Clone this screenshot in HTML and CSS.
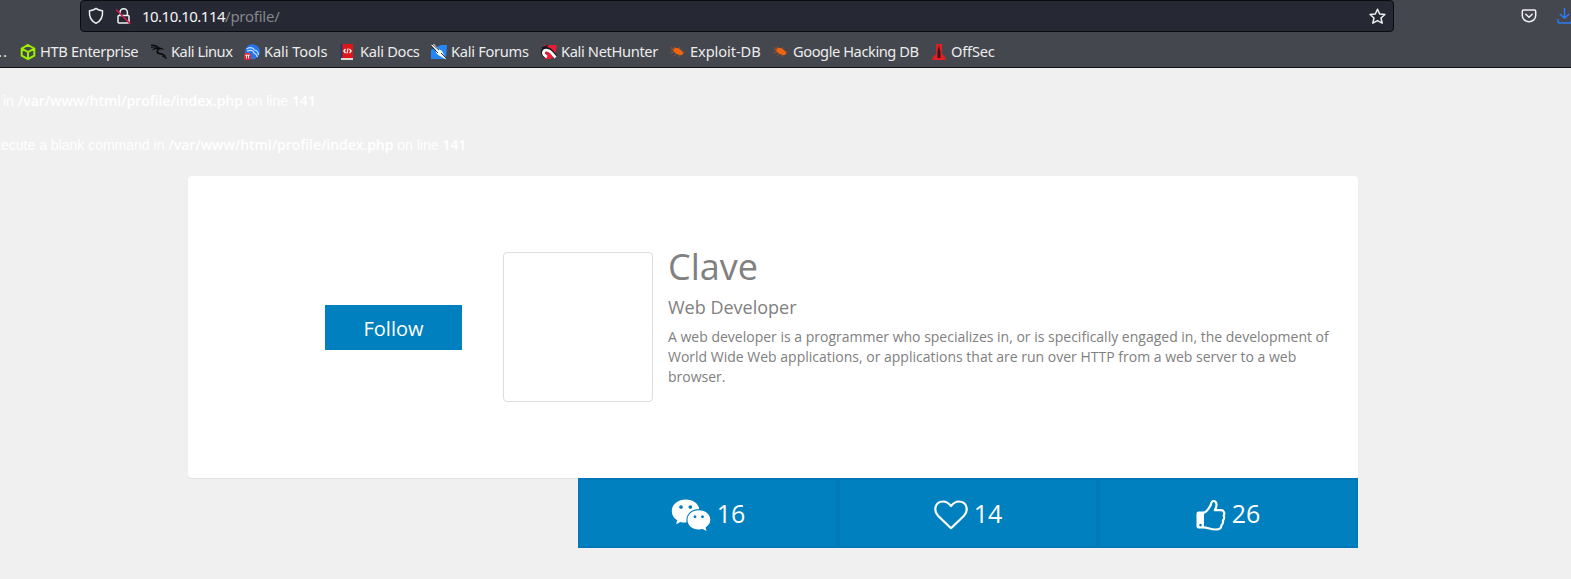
FILE: index.html
```html
<!DOCTYPE html>
<html lang="en">
<head>
<meta charset="utf-8">
<title>Profile</title>
<link rel="stylesheet" href="styles.css">
</head>
<body>
<header class="browser">
  <div class="navbar">
    <div class="urlbar">
      <svg class="shield" width="16" height="18" viewBox="0 0 16 18"><path d="M8 1.4C6.2 2.8 3.7 3.5 1.5 3.7C1 9 2.700 13.700 8 16.300C13.300 13.700 15 9 14.500 3.700C12.300 3.500 9.800 2.800 8 1.400Z"/></svg>
      <svg class="lock" width="15" height="18" viewBox="0 0 15 18"><path d="M4 8V5.500A3.700 3.700 0 0 1 11.400 5.500V8"/><rect x="2" y="8.500" width="11" height="7.500" rx="1"/><path class="slash" d="M.5 3L14 16.500"/></svg>
      <span class="url">10.10.10.114<span class="path">/profile/</span></span>
      <svg class="star" width="17" height="17" viewBox="0 0 17 17"><path d="M8.500 1.200L10.700 6L15.900 6.500L12 10L13.200 15.200L8.500 12.600L3.800 15.200L5 10L1.100 6.500L6.300 6Z"/></svg>
    </div>
    <svg class="pocket" width="16" height="16" viewBox="0 0 16 16"><path d="M2.500 2H13.500Q14.700 2 14.700 3.200V7.500A6.700 6.200 0 0 1 1.300 7.500V3.200Q1.300 2 2.500 2Z"/><path d="M4.800 6.300L8 9.200L11.200 6.300"/></svg>
    <svg class="download" width="16" height="18" viewBox="0 0 16 18"><path d="M7.500 1.500V11M3.200 7.200L7.500 11.300L11.800 7.200M1 12.500V14.500Q1 16 2.500 16H13Q14.500 16 14.500 14.500V12.500"/></svg>
  </div>
  <nav class="bookmarks">
    <span class="more">..</span>
    <a class="bm htb"><svg width="16" height="16" viewBox="0 0 16 16"><path d="M8 1L14.300 4.500V11.700L8 15.200L1.700 11.700V4.500ZM1.700 4.500L8 8L14.300 4.500M8 8V15" fill="none" stroke="#9fef00" stroke-width="2"/></svg><span>HTB Enterprise</span></a>
    <a class="bm linux"><svg width="16" height="16" viewBox="0 0 16 16"><path d="M0 .5Q6 .4 8.500 3.500Q12 3.500 13.500 6Q11 4.800 8 5.700C6 8 8 8.700 11 9.200Q15 10 16 15.700Q13.500 11.300 10 10.800C5 10.300 4.500 8 6.500 5Q3.500 4.500 .5 6.500Q2.500 3.500 7 3.300Q4 1.600 0 2Z" fill="#0a0b0c"/><path d="M11 12Q14 12 14.500 15M0 3.500Q3 2.600 6 3" stroke="#0a0b0c" fill="none"/></svg><span>Kali Linux</span></a>
    <a class="bm tools"><svg width="16" height="16" viewBox="0 0 16 16"><circle cx="8.500" cy="7.800" r="7.500" fill="#2475ee"/><path d="M2.500 5Q8 2 10.500 6Q14 6.500 14.500 11M3 7Q9 5 10 9Q12.500 10 13.500 13" fill="none" stroke="#c6e3ff" stroke-width="1.200"/><rect y="9" width="7" height="7" rx="2" fill="#e3262d"/><path d="M1.200 11.200H5.800M2.500 11.200V14.500M4.500 11.200V14.500" stroke="#fff" stroke-width=".9"/></svg><span>Kali Tools</span></a>
    <a class="bm docs"><svg width="16" height="16" viewBox="0 0 16 16"><path d="M.5 0H2.500V15H.5Z" fill="#25366c"/><path d="M2.500 0H13V14H2.500Z" fill="#df1519"/><path d="M1 14H13V16H1Z" fill="#ddd7d5"/><path d="M5.500 5L3.800 7L5.500 9M9.500 5L11.200 7L9.500 9M8 4.500L7 9.500" fill="none" stroke="#fff" stroke-width="1.200"/></svg><span>Kali Docs</span></a>
    <a class="bm forums"><svg width="16" height="16" viewBox="0 0 16 16"><path d="M0 6L10 1H16L15 15H0Z" fill="#2487f7"/><path d="M0 1L3 0L7 4.500L11 7L15 15.500L8 11.500Q4 9 5 6Z" fill="#fff"/><path d="M0 2L7 9M1 0L8 6M10 9L15 14" stroke="#17202b" stroke-width=".9"/></svg><span>Kali Forums</span></a>
    <a class="bm hunter"><svg width="16" height="16" viewBox="0 0 16 16"><path d="M3 1H16L14 12L10 15H4L0 10Z" fill="#e61c38"/><path d="M0 4Q4 1 8 1L4 5Z" fill="#15191d"/><path d="M4.500 12.500C-.5 8.500 2.500 4 6.500 5.200C9.500 5.200 9.500 7.500 12 9.500L14.500 13" fill="none" stroke="#15191d" stroke-width="4"/><path d="M6 13C0 10 2.500 5.500 6.500 6.300C9.500 6.300 9.500 8.500 12 10.500L14.500 13.500" fill="none" stroke="#fff" stroke-width="2.800"/></svg><span>Kali NetHunter</span></a>
    <a class="bm exploit"><svg width="16" height="16" viewBox="0 0 16 16"><ellipse cx="8.200" cy="7.500" rx="5.500" ry="2.900" transform="rotate(28 8.200 7.500)" fill="#ee6411"/><path d="M3 6L1 3M5 5L4 2.500M9 5L10 3M12 8L15 8M4 8L.5 9M6 10L4 12M9 11L9 13M1 6L4 6" stroke="#b95222" stroke-width=".8"/></svg><span>Exploit-DB</span></a>
    <a class="bm google"><svg width="16" height="16" viewBox="0 0 16 16"><ellipse cx="8.200" cy="7.500" rx="5.500" ry="2.900" transform="rotate(28 8.200 7.500)" fill="#ee6411"/><path d="M3 6L1 3M5 5L4 2.500M9 5L10 3M12 8L15 8M4 8L.5 9M6 10L4 12M9 11L9 13M1 6L4 6" stroke="#b95222" stroke-width=".8"/></svg><span>Google Hacking DB</span></a>
    <a class="bm offsec"><svg width="16" height="16" viewBox="0 0 16 16"><path d="M5.200 0H11V10L14.500 13.500V16H1.500V13.500L5.200 10Z" fill="#e51e22"/><path d="M7.800 1L9.500 8V14H6.500V8Z" fill="#35171b"/></svg><span>OffSec</span></a>
  </nav>
</header>
<main class="page">
  <p class="warning first">in <b>/var/www/html/profile/index.php</b> on line <b>141</b></p>
  <p class="warning second">xecute a blank command in <b>/var/www/html/profile/index.php</b> on line <b>141</b></p>
  <section class="card">
    <button class="follow">Follow</button>
    <div class="avatar"></div>
    <div class="bio">
      <h1>Clave</h1>
      <h2>Web Developer</h2>
      <p>A web developer is a programmer who specializes in, or is specifically engaged in, the development of<br>World Wide Web applications, or applications that are run over HTTP from a web server to a web<br>browser.</p>
    </div>
  </section>
  <section class="stats">
    <div class="stat"><svg width="40" height="34" viewBox="0 0 40 34"><path fill-rule="evenodd" d="M14.500 1.500C22 1.500 27.400 5.500 28.200 11C20.500 11 14.500 16 15.500 24.500C13 24.700 11 24.500 9.500 24L5 26.300L6.300 22.200C2.500 20 .8 16.800 .8 13.200C.8 6.500 7 1.500 14.500 1.500ZM10 7.200a1.800 1.800 0 1 0 .01 0ZM19.300 7.200a1.800 1.800 0 1 0 .01 0ZM27.800 12.300C34.500 12.300 39.300 16.500 39.300 21.800C39.300 25 37.700 27.500 34.500 29.500L35.500 33L31.800 31C22.500 33 16.500 28 16.500 22C16.500 16.500 21.300 12.300 27.800 12.300ZM24 17.300a1.400 1.400 0 1 0 .01 0ZM31.500 17.300a1.400 1.400 0 1 0 .01 0Z"/></svg><span>16</span></div>
    <div class="stat"><svg width="34" height="30" viewBox="0 0 34 30"><path class="line" d="M17 28.200L4 15.700C-.5 11 .5 1.500 9.200 1.500C13.200 1.500 15.500 4.200 17 6C18.500 4.200 20.800 1.500 24.800 1.500C33.500 1.500 34.500 11 30 15.700Z"/></svg><span>14</span></div>
    <div class="stat"><svg width="30" height="32" viewBox="0 0 30 32"><path fill-rule="evenodd" d="M2.500 12.500H8V29.500H2.500Q.5 29.500 .5 27.500V14.500Q.5 12.500 2.500 12.500ZM4.500 24.800a1.300 1.300 0 1 0 .01 0Z"/><path class="line" d="M7.500 13.800C11.500 13 13 8.500 14.500 6.500C15.300 5.300 14.800 2 17.500 2C21 2 21.500 6.500 18.800 11.200H25C27.700 11.200 29.200 14 27.700 16.500C28.500 18.500 28 20.300 27 21.500C27.300 23.500 26.700 25.200 25.500 26.300C25.300 29.300 23.500 30.500 20 30.500C14 30.500 11.500 28.300 7.500 28.300"/></svg><span>26</span></div>
  </section>
</main>
</body>
</html>
```
FILE: styles.css
```css
* { box-sizing: border-box; }
body { margin: 0; height: 579px; overflow: hidden; background: #f0f0f0; font-family: "Open Sans", sans-serif; }
svg { display: block; flex: none; overflow: visible; }
.browser { height: 68px; overflow: hidden; background: #44474d; border-bottom: 1px solid #0d0e13; font-family: "Noto Sans", sans-serif; }
.navbar { display: flex; align-items: center; height: 32px; padding-left: 80px; }
.navbar svg { fill: none; stroke: #f0f0f3; stroke-width: 1.5; stroke-linejoin: round; stroke-linecap: round; }
.urlbar { display: flex; align-items: center; flex: none; width: 1314px; height: 32px; padding: 0 7px; background: #262833; border: 1px solid #0b0c12; border-radius: 4px; }
.urlbar .lock { margin-left: 12px; }
.navbar .slash { stroke: #d91b4a; }
.url { margin-left: 11px; font-size: 15px; letter-spacing: -.52px; color: #f5f5f7; white-space: nowrap; }
.path { color: #85868d; letter-spacing: -.25px; }
.star { margin-left: auto; }
.pocket { margin-left: 127px; }
.navbar .download { margin-left: 20px; stroke: #2d7bf5; }
.bookmarks { display: flex; align-items: center; height: 36px; padding-top: 3px; color: #ececed; font-size: 14.67px; white-space: nowrap; }
.more { width: 20px; letter-spacing: 1px; margin-top: -2px; margin-left: -2px; margin-right: 2px; }
.bm { display: flex; align-items: center; gap: 4px; flex: none; }
.bm span { margin-top: -2px; }
.htb { width: 131px; letter-spacing: -.36px; }
.linux { width: 93px; letter-spacing: -.45px; }
.tools { width: 96px; letter-spacing: -.1px; }
.docs { width: 91px; letter-spacing: -.3px; }
.forums { width: 110px; letter-spacing: -.3px; }
.hunter { width: 129px; letter-spacing: -.36px; }
.exploit { width: 103px; letter-spacing: -.1px; }
.google { width: 158px; letter-spacing: -.44px; }
.offsec { letter-spacing: -.2px; }
.page { padding: 0 213px 0 188px; }
.warning { margin: 0 0 24px; height: 20px; line-height: 20px; font-family: "Liberation Sans", sans-serif; font-size: 14px; color: #fff; white-space: nowrap; }
.warning b { font-family: "Open Sans", sans-serif; font-weight: 600; letter-spacing: -.05px; }
.first { margin-left: -185px; padding-top: 23px; height: 43px; }
.second { margin-left: -194px; margin-bottom: 21px; }
.card { display: flex; height: 302px; padding: 76px 0 0 137px; background: #fff; border-radius: 4px; box-shadow: 0 1px 1px rgba(0,0,0,.06); }
.follow { width: 137px; height: 45px; margin-top: 53px; padding: 2px 0 0; border: 0; background: #0080be; color: #fff; font: 20px "Open Sans", sans-serif; }
.avatar { width: 150px; height: 150px; margin-left: 41px; border: 1px solid #ddd; border-radius: 4px; }
.bio { margin-left: 15px; color: #808080; white-space: nowrap; }
.bio h1 { margin: -5px 0 0; font-size: 36px; line-height: 40px; font-weight: 400; }
.bio h2 { margin: 10px 0; font-size: 18px; line-height: 20px; font-weight: 400; }
.bio p { margin: 0; font-size: 14px; line-height: 20px; }
.stats { display: flex; margin-left: 390px; }
.stat { display: flex; align-items: center; justify-content: center; gap: 6px; width: 260px; height: 70px; padding-top: 2px; background: #0080be; box-shadow: inset 0 0 0 2px #0078b5; color: #fff; font-size: 25px; }
.stat span { margin-top: -2px; }
.stat svg { fill: #fff; margin-top: 1px; }
.stat .line { fill: none; stroke: #fff; stroke-width: 2.2; stroke-linejoin: round; }
```
